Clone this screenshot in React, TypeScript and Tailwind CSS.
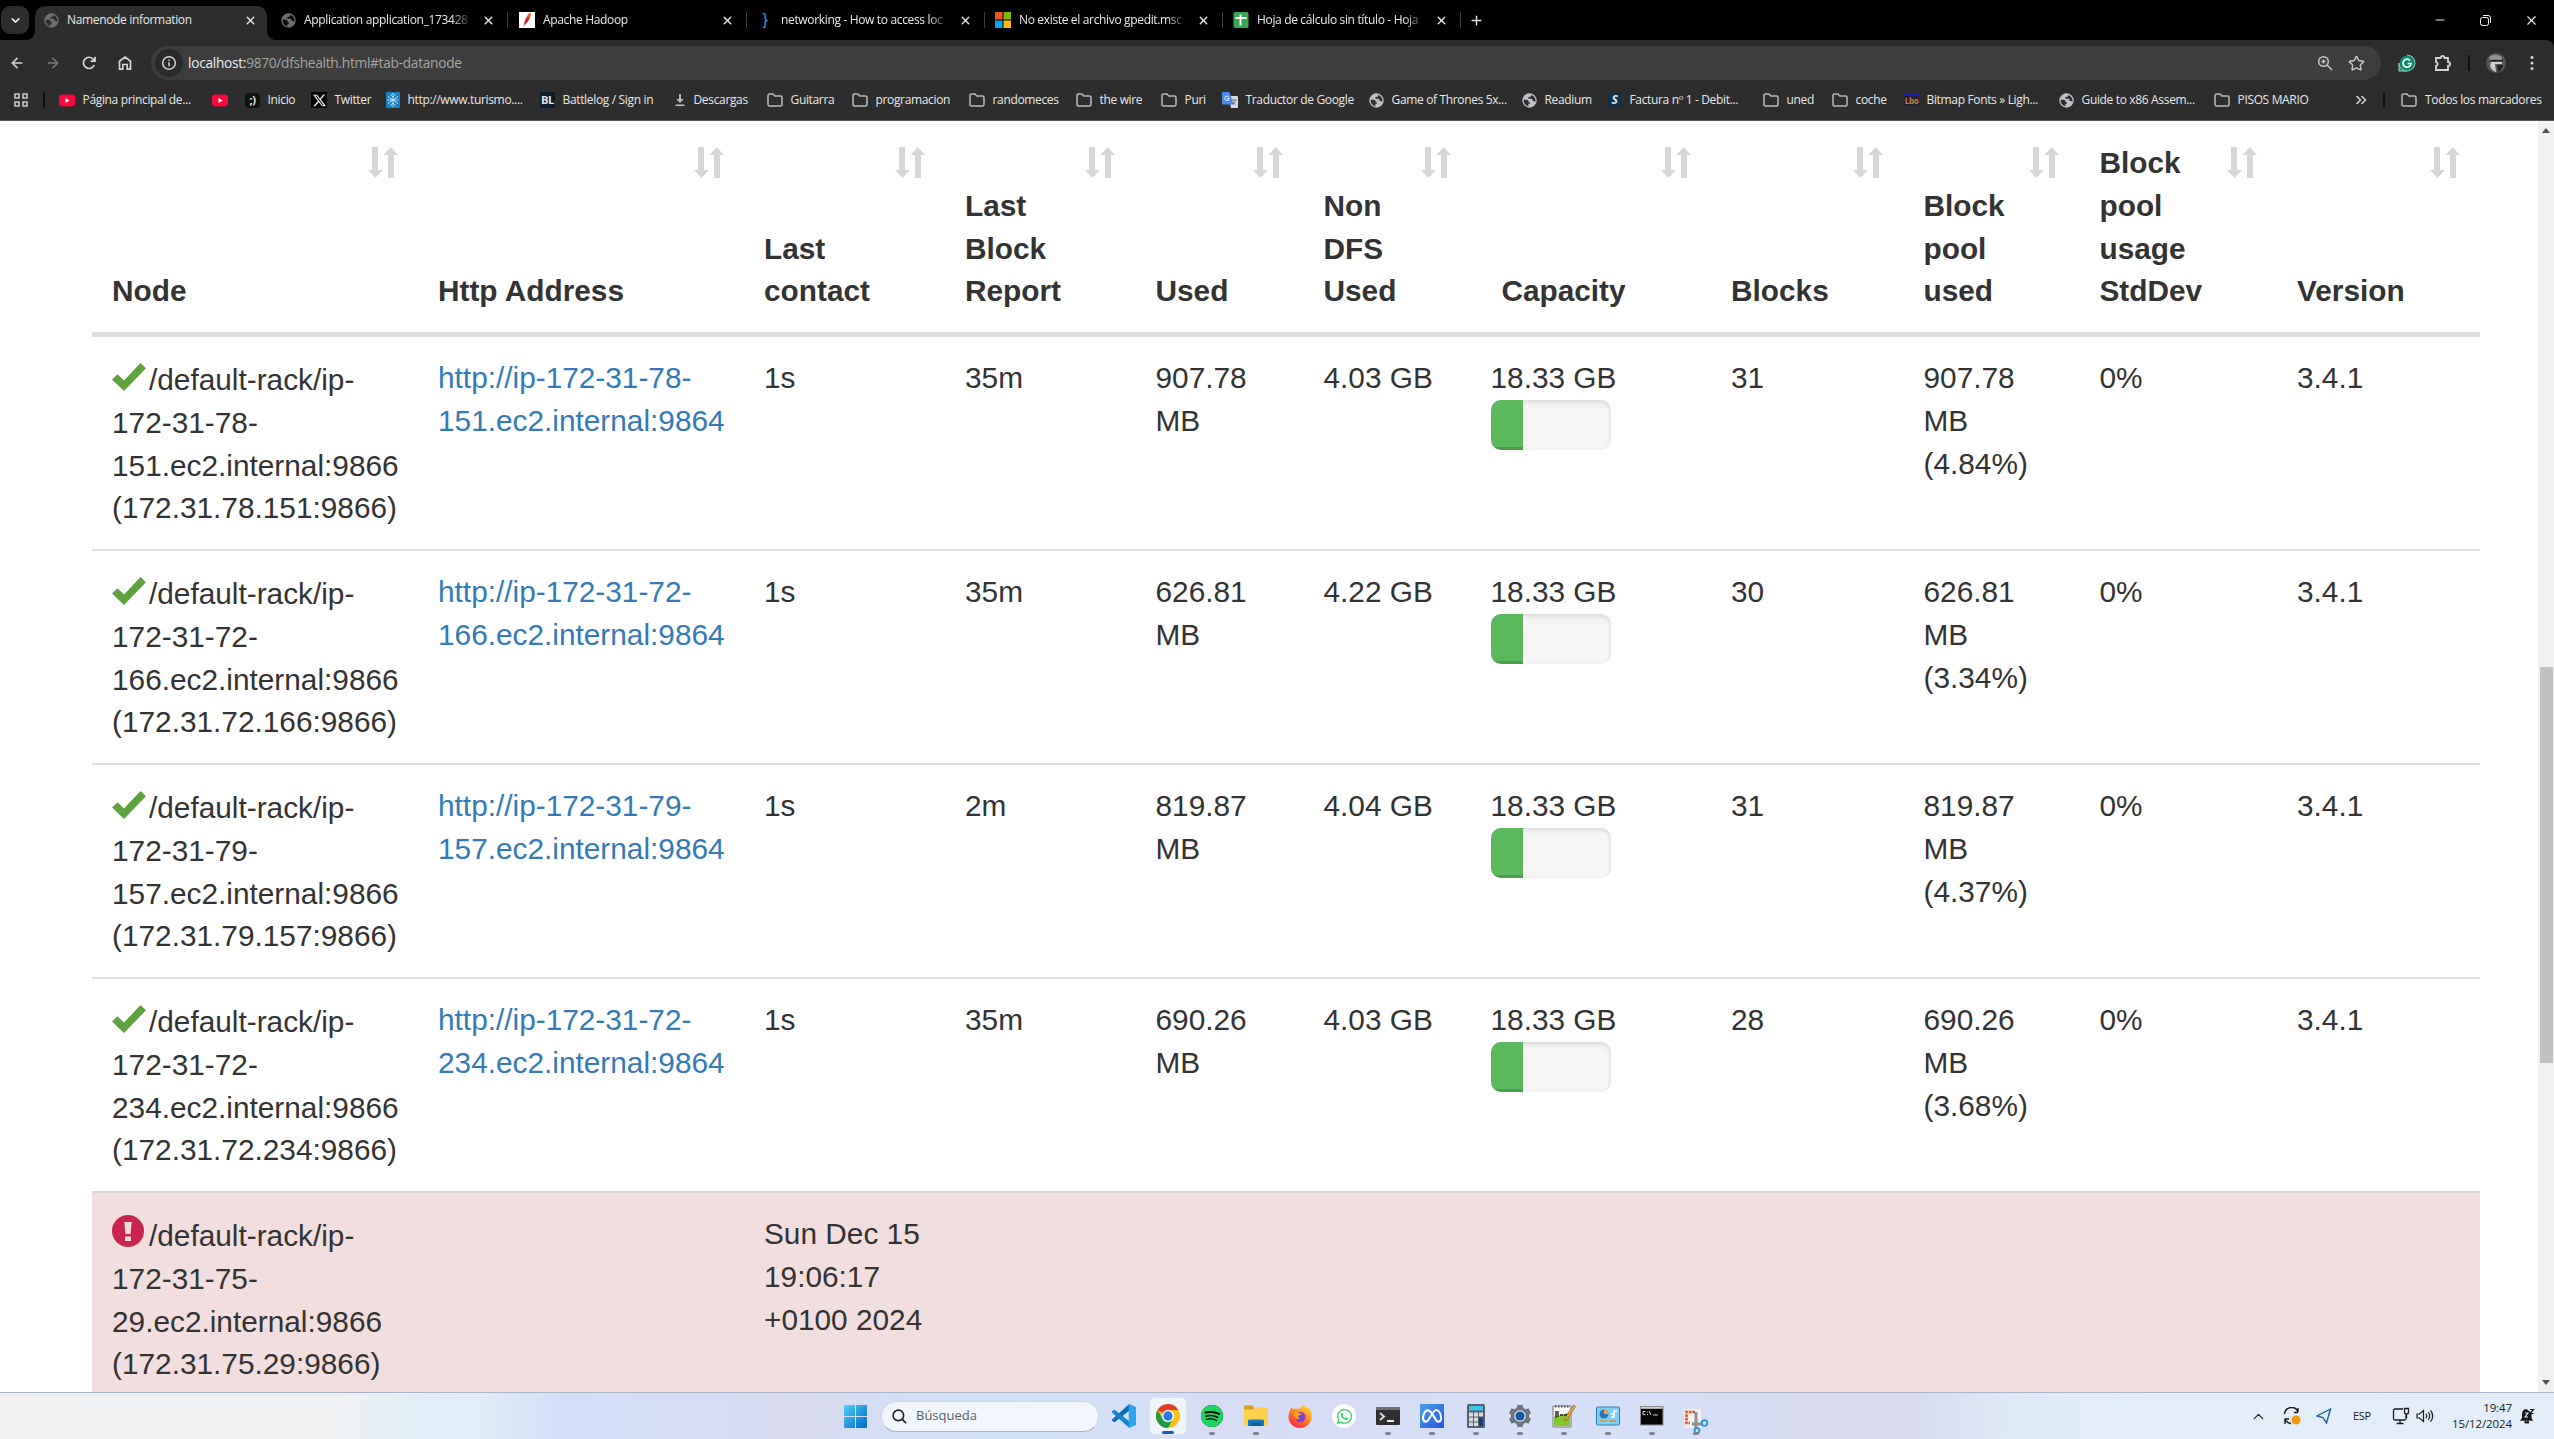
import React from "react";
import { SiSpotify, SiWhatsapp, SiMeta, SiX } from "react-icons/si";
import { ArrowLeft, ArrowRight, Star, ChevronUp, ChevronDown, Plus, X, Minus } from "lucide-react";

const Globe = ({ c = "#bdc1c6", bg = "#2d2d2d" }: { c?: string; bg?: string }) => (
  <svg viewBox="0 0 16 16" className="size-[15px] shrink-0">
    <circle cx="8" cy="8" r="7.7" fill={c} />
    <path d="M1.800 7.200h3.400q1.800 0 1.800 1.800v.8h1.400v1.700H6.800v2.700A6.400 6.400 0 0 1 1.800 7.200zM9.800 2q.2 2-1.600 2.200H6.800v1.800h3.400q1 0 1 1v1.400h1.700l1.300 1.300A6.400 6.400 0 0 0 9.800 2z" fill={bg} />
  </svg>
);

const Folder = () => (
  <svg viewBox="0 0 16 14" className="h-[14px] w-4 shrink-0" fill="none" stroke="#b8bbbe" strokeWidth="1.500">
    <path d="M1 2.500Q1 1 2.500 1H6l1.800 2h5.700Q15 3 15 4.500v7q0 1.500-1.500 1.500h-11Q1 13 1 11.500z" />
  </svg>
);

const YouTube = () => (
  <svg viewBox="0 0 16 13" className="h-[13px] w-4 shrink-0">
    <rect width="16" height="12" y=".5" rx="3" fill="#f8083b" />
    <path d="M6.500 4v5l4-2.500z" fill="#fff" />
  </svg>
);

const Sheets = () => (
  <svg viewBox="0 0 16 16" className="size-4 shrink-0">
    <rect width="15" height="16" x=".5" rx="1.500" fill="#34a853" />
    <path d="M7.500 2.500v11M2.500 6h11" stroke="#fff" strokeWidth="1.800" />
  </svg>
);

const Microsoft = () => (
  <svg viewBox="0 0 16 16" className="size-4 shrink-0">
    <path d="M0 0h7.500v7.500H0z" fill="#f25022" />
    <path d="M8.500 0H16v7.500H8.500z" fill="#7fba00" />
    <path d="M0 8.500h7.500V16H0z" fill="#00a4ef" />
    <path d="M8.500 8.500H16V16H8.500z" fill="#ffb900" />
  </svg>
);

const Feather = () => (
  <svg viewBox="0 0 16 16" className="size-4 shrink-0">
    <rect width="16" height="16" fill="#fff" />
    <path d="M11.500 .8C8 3 5.500 8 4.500 15.200l1.200-2.700C9 11 12 5 11.500 .8z" fill="#c8203c" />
    <path d="M11.500 .8C9 2.200 8 4 7.500 6l2.900-.6C11.400 3.500 11.700 2 11.500 .8z" fill="#e8622c" />
  </svg>
);

const tabs = [
  { icon: <Globe c="#6c6e72" bg="#0c0c0c" />, title: "Application application_173428" },
  { icon: <Feather />, title: "Apache Hadoop" },
  { icon: <span className="w-4 text-center font-['Liberation_Sans'] text-[16px] leading-4 text-[#1ea0e6]">{"}"}</span>, title: "networking - How to access loc" },
  { icon: <Microsoft />, title: "No existe el archivo gpedit.msc" },
  { icon: <Sheets />, title: "Hoja de cálculo sin título - Hoja" },
];

const bookmarks: { w: string; icon: React.ReactNode; label?: string }[] = [
  { w: "w-[153px]", icon: <YouTube />, label: "Página principal de..." },
  { w: "w-[33px]", icon: <YouTube /> },
  { w: "w-[66px]", icon: <span className="flex h-[15px] w-[15px] items-center justify-center rounded-sm bg-[#111] text-[11px] font-bold">;)</span>, label: "Inicio" },
  { w: "w-[75px]", icon: <span className="flex size-4 items-center justify-center bg-black"><SiX size={13} /></span>, label: "Twitter" },
  {
    w: "w-[154px]",
    icon: (
      <svg viewBox="0 0 14 16" className="h-4 w-[14px] shrink-0">
        <rect width="14" height="16" fill="#1583c4" />
        <path d="M7 1v14M2 4.500l10 7M12 4.500l-10 7M4.500 2.500L7 5l2.500-2.500M4.500 13.500L7 11l2.500 2.500M1.500 8h11" stroke="#dff1ff" strokeWidth="1" fill="none" strokeDasharray="2 .6" />
      </svg>
    ),
    label: "http://www.turismo....",
  },
  { w: "w-[134px]", icon: <span className="flex h-4 w-[15px] items-center justify-center bg-[#0c1d2c] text-[11px] font-bold">BL</span>, label: "Battlelog / Sign in" },
  {
    w: "w-[93px]",
    icon: (
      <svg viewBox="0 0 12 14" className="h-[14px] w-3 shrink-0" fill="#b8bbbe">
        <path d="M5 1h2v5h2.800L6 10 2.200 6H5zM1.500 11.500h9v1.600h-9z" />
      </svg>
    ),
    label: "Descargas",
  },
  { w: "w-[85px]", icon: <Folder />, label: "Guitarra" },
  { w: "w-[117px]", icon: <Folder />, label: "programacion" },
  { w: "w-[107px]", icon: <Folder />, label: "randomeces" },
  { w: "w-[85px]", icon: <Folder />, label: "the wire" },
  { w: "w-[61px]", icon: <Folder />, label: "Puri" },
  {
    w: "w-[147px]",
    icon: (
      <svg viewBox="0 0 16 16" className="size-4 shrink-0">
        <path d="M7 4h8q1 0 1 1v10q0 1-1 1H9z" fill="#d8dadd" />
        <path d="M1 0h6.500l4 12.500H1q-1 0-1-1V1q0-1 1-1z" fill="#4a89f3" />
        <path d="M9.500 8h5M12 7v1M10.500 12.500q2.500-1.500 3-4.500M10.500 9.500q1 2 3 3" stroke="#5f6a78" strokeWidth=".9" fill="none" />
        <path d="M6.800 5a2.200 2.200 0 1 0 .4 1.600H5" stroke="#fff" strokeWidth="1" fill="none" />
      </svg>
    ),
    label: "Traductor de Google",
  },
  { w: "w-[153px]", icon: <Globe />, label: "Game of Thrones 5x..." },
  { w: "w-[85px]", icon: <Globe />, label: "Readium" },
  { w: "w-[156px]", icon: <span className="flex size-[15px] items-center justify-center rounded-sm bg-[#12304a] text-[12px] font-bold italic">S</span>, label: "Factura nº 1 - Debit..." },
  { w: "w-[69px]", icon: <Folder />, label: "uned" },
  { w: "w-[72px]", icon: <Folder />, label: "coche" },
  { w: "w-[155px]", icon: <span className="flex h-3 w-[15px] items-center justify-center border-t-2 border-[#1a1ab4] bg-[#262033] text-[8px] font-bold text-[#c8813c]">Lbo</span>, label: "Bitmap Fonts » Ligh..." },
  { w: "w-[155px]", icon: <Globe />, label: "Guide to x86 Assem..." },
  { w: "w-[139px]", icon: <Folder />, label: "PISOS MARIO" },
];

function Chrome() {
  return (
    <header className="h-[121px] shrink-0 border-b border-[#5a5a5a] bg-[#2d2d2d] font-['Open_Sans',sans-serif] text-[12px] tracking-[-0.34px] text-[#e8e8e8]">
      <div className="flex h-10 bg-black">
        <div className="relative flex w-[35px] items-center">
          <div className="ml-px flex h-7 w-[28px] items-center justify-center rounded-[9px] bg-[#2d2d2d]">
            <ChevronDown size={13} strokeWidth={3} />
          </div>
          <span className="absolute right-0 bottom-0 size-2 bg-[radial-gradient(circle_at_0_0,transparent_7.500px,#2d2d2d_8px)]" />
        </div>
        <div className="relative mt-[6px] flex w-[232px] items-center rounded-t-[10px] bg-[#2d2d2d] pb-[6px] pl-[9px]">
          <Globe c="#6c6e72" />
          <span className="ml-2 w-[177px]">Namenode information</span>
          <X size={13} strokeWidth={2.600} />
          <span className="absolute -right-2 bottom-0 size-2 bg-[radial-gradient(circle_at_100%_0,transparent_7.500px,#2d2d2d_8px)]" />
        </div>
        <div className="ml-[14px] flex items-center">
          {tabs.map((t) => (
            <div key={t.title} className="flex h-10 w-[238px] items-center">
              {t.icon}
              <span className="ml-2 w-[168px] whitespace-nowrap [mask-image:linear-gradient(to_right,black_88%,transparent)]">{t.title}</span>
              <X size={13} strokeWidth={2.600} className="ml-[10px] shrink-0" />
              <span className="ml-3 h-4 w-px bg-[#3d3d3d]" />
            </div>
          ))}
          <Plus size={15} strokeWidth={2.200} className="-ml-[2px]" />
        </div>
        <div className="ml-auto flex items-center gap-[33px] pr-[15px]">
          <Minus size={14} strokeWidth={1.800} />
          <svg viewBox="0 0 11 11" className="size-[11px]" fill="none" stroke="#fff">
            <rect x=".5" y="2.500" width="8" height="8" rx="2" />
            <path d="M3 .5h5q2.500 0 2.500 2.500v5" />
          </svg>
          <X size={15} strokeWidth={1.800} />
        </div>
      </div>

      <div className="flex h-[46px] items-center bg-black">
        <div className="flex h-full w-full items-center rounded-tr-lg bg-[#2d2d2d]">
          <div className="flex w-[151px] items-center gap-5 pl-[9px] text-[#d5d5d5]">
            <ArrowLeft size={16} strokeWidth={2.400} />
            <ArrowRight size={16} strokeWidth={2.400} className="text-[#7a7a7a]" />
            <svg viewBox="0 0 16 16" className="size-4" fill="none" stroke="currentColor" strokeWidth="1.700">
              <path d="M13.200 10A5.600 5.600 0 1 1 12.500 4.500L14 6M14 1.800V6.200H9.600" />
            </svg>
            <svg viewBox="0 0 16 16" className="size-4" fill="none" stroke="currentColor" strokeWidth="1.700">
              <path d="M2.500 14.200V6.200L8 2l5.500 4.200v8h-3.300V9.500H5.800v4.700z" />
            </svg>
          </div>
          <div className="flex h-[34px] w-[2230px] items-center rounded-full bg-[#3d3d3d] pl-1 text-[13.700px] tracking-[-0.28px]">
            <span className="flex size-[28px] items-center justify-center rounded-full bg-[#2a2a2a]">
              <svg viewBox="0 0 16 16" className="size-4" fill="none" stroke="#d5d5d5" strokeWidth="1.500">
                <circle cx="8" cy="8" r="6.300" />
                <path d="M8 7.200v4M8 4.400v1.500" />
              </svg>
            </span>
            <span className="ml-[5px] text-[#a5a5a5]">
              <span className="text-[#efefef]">localhost:</span>9870/dfshealth.html#tab-datanode
            </span>
            <svg viewBox="0 0 16 16" className="ml-auto size-4" fill="none" stroke="#c7c7c7" strokeWidth="1.500">
              <circle cx="6.500" cy="6.500" r="4.800" />
              <path d="M10 10l5 5M4.500 6.500h4M6.500 4.500v4" />
            </svg>
            <Star size={17} className="mr-4 ml-[15px] text-[#c7c7c7]" />
          </div>
          <svg viewBox="0 0 18 18" className="ml-[17px] size-[18px]">
            <path d="M9 1a8 8 0 1 1-8 8v8h8" fill="#0f8a6c" stroke="#9fd5c7" />
            <circle cx="9" cy="9" r="7.500" fill="#0f8a6c" />
            <path d="M12 6.500A4 4 0 1 0 13 9.500H9.700" stroke="#fff" strokeWidth="1.700" fill="none" />
          </svg>
          <svg viewBox="0 0 18 18" className="ml-[18px] size-[18px]" fill="none" stroke="#d5d5d5" strokeWidth="1.800">
            <path d="M2 4h4.500a2 2 0 0 1 4 0H14v4a2 2 0 0 1 0 4v4H2v-4a2.200 2.200 0 0 0 0-4.200z" />
          </svg>
          <span className="ml-4 h-4 w-[2px] bg-[#111]" />
          <svg viewBox="0 0 20 20" className="ml-[16px] size-5">
            <circle cx="10" cy="10" r="10" fill="#55575a" />
            <path d="M3 4q6-5 13 0l-1 4H4z" fill="#8f9193" />
            <path d="M5 9h11v2H9l1 8q-4-1-6-6z" fill="#c9cbcc" />
            <path d="M11 12h6q-1 5-5 7z" fill="#1e1f20" />
            <path d="M4 7.500h13" stroke="#18191a" strokeWidth="1.200" />
          </svg>
          <svg viewBox="0 0 4 16" className="ml-[24px] h-4 w-1" fill="#d5d5d5">
            <circle cx="2" cy="2.500" r="1.500" />
            <circle cx="2" cy="8" r="1.500" />
            <circle cx="2" cy="13.500" r="1.500" />
          </svg>
        </div>
      </div>

      <div className="flex h-7 items-center">
        <div className="flex w-[59px] items-center">
          <svg viewBox="0 0 14 14" className="ml-[14px] size-[14px]" fill="none" stroke="#c7c7c7" strokeWidth="1.600">
            <path d="M1 1h4v4H1zM9 1h4v4H9zM1 9h4v4H1zM9 9h4v4H9z" />
          </svg>
          <span className="ml-[15px] h-4 w-[2px] bg-[#111]" />
        </div>
        {bookmarks.map((b, i) => (
          <div key={i} className={`flex shrink-0 items-center whitespace-nowrap ${b.w}`}>
            {b.icon}
            {b.label && <span className="ml-[7.500px]">{b.label}</span>}
          </div>
        ))}
        <svg viewBox="0 0 12 10" className="ml-[2px] h-[10px] w-3" fill="none" stroke="#d5d5d5" strokeWidth="1.500">
          <path d="M1.500 1l4 4-4 4M6.500 1l4 4-4 4" />
        </svg>
        <span className="ml-[16px] h-4 w-[2px] bg-[#111]" />
        <div className="ml-[16px] flex items-center">
          <Folder />
          <span className="ml-2 whitespace-nowrap">Todos los marcadores</span>
        </div>
      </div>
    </header>
  );
}

const columns = [
  { w: "w-[326px]", lines: ["Node"] },
  { w: "w-[326px]", lines: ["Http Address"] },
  { w: "w-[201px]", lines: ["Last", "contact"] },
  { w: "w-[190.500px]", lines: ["Last", "Block", "Report"] },
  { w: "w-[168px]", lines: ["Used"] },
  { w: "w-[167.500px]", lines: ["Non", "DFS", "Used"] },
  { w: "w-[240px]", lines: ["Capacity"], center: true },
  { w: "w-[192.500px]", lines: ["Blocks"] },
  { w: "w-[176px]", lines: ["Block", "pool", "used"] },
  { w: "w-[197.500px]", lines: ["Block", "pool", "usage", "StdDev"] },
  { w: "w-[203px]", lines: ["Version"] },
];

const nodes = [
  { a: "78", b: "151", report: "35m", used: "907.78", non: "4.03 GB", blocks: "31", pct: "4.84%" },
  { a: "72", b: "166", report: "35m", used: "626.81", non: "4.22 GB", blocks: "30", pct: "3.34%" },
  { a: "79", b: "157", report: "2m", used: "819.87", non: "4.04 GB", blocks: "31", pct: "4.37%" },
  { a: "72", b: "234", report: "35m", used: "690.26", non: "4.03 GB", blocks: "28", pct: "3.68%" },
];

const SortIcon = () => (
  <svg viewBox="0 0 30 31" className="absolute top-[5px] right-[20.500px] h-[31px] w-[30px]" fill="#d6d6d6">
    <path d="M4 0h6v23h5L7.500 31 0 23h4zM20 31h6V8h4L22.800 0 15.500 8H20z" />
  </svg>
);

const Check = () => (
  <svg viewBox="0 0 34 28" className="mt-[-7px] mr-[3px] h-[28px] w-[34px] shrink-0" fill="#5fa33e">
    <path d="M0 16.500l5.500-5.300 6.500 6.400L28.500 0 34 5.200 12 28z" />
  </svg>
);

const Alert = () => (
  <svg viewBox="0 0 32 32" className="mt-[-11px] mr-[5px] size-8 shrink-0">
    <circle cx="16" cy="16" r="16" fill="#c7254e" />
    <path d="M12.300 7h7.400l-1.200 12h-5zM13 21.500h6V26h-6z" fill="#f2dede" />
  </svg>
);

const NodeName = ({ icon, a, b }: { icon: React.ReactNode; a: string; b: string }) => (
  <>
    <div className="flex items-center pt-[2px]">
      {icon}
      <span>/default-rack/ip-</span>
    </div>
    <div>172-31-{a}-</div>
    <div>{b}.ec2.internal:9866</div>
    <div>(172.31.{a}.{b}:9866)</div>
  </>
);

function DataTable() {
  return (
    <div className="ml-[92px] w-[2388px] font-['Liberation_Sans',Arial,sans-serif] text-[29.800px] leading-[42.750px] text-[#333]">
      <div className="flex border-b-[5px] border-[#ddd] pb-[19px] pt-[21px] font-bold">
        {columns.map((c, i) => (
          <div key={i} className={`relative flex shrink-0 flex-col justify-end pl-5 ${c.center ? "pr-[75px] text-center" : ""} ${c.w}`}>
            <SortIcon />
            {c.lines.map((l) => (
              <span key={l}>{l}</span>
            ))}
          </div>
        ))}
      </div>
      {nodes.map((n, i) => (
        <div key={i} className={`flex *:shrink-0 *:pl-5 ${i ? "h-[214px] border-t-2 border-[#ddd] pt-5" : "h-[212px] pt-5"}`}>
          <div className="w-[326px]">
            <NodeName icon={<Check />} a={n.a} b={n.b} />
          </div>
          <div className="w-[326px] text-[#337ab7]">
            http://ip-172-31-{n.a}-<br />
            {n.b}.ec2.internal:9864
          </div>
          <div className="w-[201px]">1s</div>
          <div className="w-[190.500px]">{n.report}</div>
          <div className="w-[168px]">
            {n.used}
            <br />
            MB
          </div>
          <div className="w-[167px]">{n.non}</div>
          <div className="w-[240.500px]">
            18.33 GB
            <div className="h-[50px] w-[120px] overflow-hidden rounded-[10px] bg-[#f5f5f5] shadow-[inset_0_2px_5px_rgba(0,0,0,0.12)]">
              <div className="h-full w-8 bg-[#5cb85c] shadow-[inset_0_-3px_0_rgba(0,0,0,0.15)]" />
            </div>
          </div>
          <div className="w-[192.500px]">{n.blocks}</div>
          <div className="w-[176px]">
            {n.used}
            <br />
            MB
            <br />({n.pct})
          </div>
          <div className="w-[197.500px]">0%</div>
          <div className="w-[203px]">3.4.1</div>
        </div>
      ))}
      <div className="flex h-[214px] border-t-2 border-[#ddd4d4] bg-[#f2dede] pt-5 *:shrink-0 *:pl-5">
        <div className="w-[652px]">
          <NodeName icon={<Alert />} a="75" b="29" />
        </div>
        <div>
          Sun Dec 15
          <br />
          19:06:17
          <br />
          +0100 2024
        </div>
      </div>
    </div>
  );
}

function Scrollbar() {
  return (
    <div className="ml-auto flex w-4 flex-col items-center bg-[#f1f1f1]">
      <svg viewBox="0 0 8 5" className="mt-[7px] h-[5px] w-2 shrink-0" fill="#505050">
        <path d="M4 0l4 5H0z" />
      </svg>
      <div className="mt-[534px] h-[396px] w-[13px] shrink-0 bg-[#c1c1c1]" />
      <svg viewBox="0 0 8 5" className="mt-auto mb-[7px] h-[5px] w-2 shrink-0" fill="#505050">
        <path d="M0 0h8L4 5z" />
      </svg>
    </div>
  );
}

const ChromeLogo = () => (
  <svg viewBox="0 0 24 24" className="size-6">
    <circle cx="12" cy="12" r="12" fill="#fbc116" />
    <path d="M12 0a12 12 0 0 1 10.400 6H12a6 6 0 0 0-5.200 3L1.600 6A12 12 0 0 1 12 0z" fill="#e33b2e" />
    <path d="M1.600 6l5.200 9a6 6 0 0 0 10.400 0l-5.200 9A12 12 0 0 1 1.600 6z" fill="#219a48" />
    <circle cx="12" cy="12" r="6" fill="#fff" />
    <circle cx="12" cy="12" r="4.700" fill="#2b76e5" />
  </svg>
);

const apps: { icon: React.ReactNode; dot?: boolean; active?: boolean }[] = [
  {
    icon: (
      <svg viewBox="0 0 24 24" className="size-6">
        <path d="M17.500 6.500L2.500 18.200 0 16.700 0 15.600 17.300 0z" fill="#0c6fb8" />
        <path d="M17.500 17.500L2.500 5.800 0 7.300 0 8.400 17.300 24z" fill="#1283cc" />
        <path d="M17.300 0L24 3v18l-6.700 3q-.9-.3-.5-1.500V1.500Q16.600.5 17.300 0z" fill="#2aa5f0" />
      </svg>
    ),
  },
  { icon: <ChromeLogo />, active: true },
  { icon: <span className="rounded-full bg-black"><SiSpotify size={22} color="#1ed760" /></span>, dot: true },
  {
    icon: (
      <svg viewBox="0 0 24 24" className="size-6">
        <path d="M0 2.500Q0 1.500 1 1.500h7l2 2v4H0z" fill="#d89b1c" />
        <path d="M0 5.500h10l2-2h11q1 0 1 1V22H0z" fill="#fbd04b" />
        <path d="M4 22v-5q0-1.500 1.500-1.500h13q1.500 0 1.500 1.500v5z" fill="#1778c4" />
        <path d="M7 18.500h10V22H7z" fill="#0f5c9e" />
      </svg>
    ),
    dot: true,
  },
  {
    icon: (
      <svg viewBox="0 0 24 24" className="size-6">
        <defs>
          <linearGradient id="ff" x1="0.800" y1="0" x2="0.200" y2="1">
            <stop offset="0" stopColor="#ffde3a" />
            <stop offset=".45" stopColor="#ff8a1e" />
            <stop offset="1" stopColor="#f5204c" />
          </linearGradient>
        </defs>
        <path d="M3.500 3l2 2.500Q8 4 10.500 5 13 3 16 0q1 3 3.500 4.500l.5-1.500Q24 7 23.500 13A11.500 11 0 0 1 .5 13Q.3 8 3.500 3z" fill="url(#ff)" />
        <circle cx="12.300" cy="13" r="5.200" fill="#7a3fd0" />
        <path d="M5 8.500q4-1.500 6 .5l3 .5q-1 2-3.500 2.200-1 2 1.500 3.300-4 1-5.500-2z" fill="#ff9a24" />
      </svg>
    ),
  },
  { icon: <span className="flex size-6 items-center justify-center rounded-full bg-white"><SiWhatsapp size={15} color="#2fce6a" /></span> },
  {
    icon: (
      <svg viewBox="0 0 24 18" className="h-[18px] w-6">
        <rect width="24" height="18" rx="1" fill="#2f2f31" />
        <path d="M0 0h24v3H0z" fill="#6e6e70" />
        <path d="M4 6l4 3.500L4 13" stroke="#d8d8d8" strokeWidth="2" fill="none" />
        <path d="M11 14h7" stroke="#fff" strokeWidth="1.800" />
      </svg>
    ),
    dot: true,
  },
  { icon: <span className="flex size-6 items-center justify-center bg-linear-to-br from-[#4da0e0] to-[#2a50e0]"><SiMeta size={20} color="#fff" /></span>, dot: true },
  {
    icon: (
      <svg viewBox="0 0 18 24" className="h-6 w-[18px]">
        <rect width="18" height="24" rx="1.500" fill="#56606e" />
        <path d="M2 2h14v4.500H2z" fill="#3cc6ee" />
        <path d="M2 8.500h4v4H2zM7 8.500h4v4H7zM12 8.500h4v4h-4zM2 13.500h4v4H2zM7 13.500h4v4H7zM2 18.500h4v3.500H2zM7 18.500h4v3.500H7z" fill="#d8dde4" />
        <path d="M12 13.500h4V22h-4z" fill="#113f80" />
      </svg>
    ),
    dot: true,
  },
  {
    icon: (
      <svg viewBox="0 0 24 24" className="size-6">
        <path d="M9.500 1h5l.8 3 2.200 1.200 3-.8 2.500 4.300L21 11v2l2 2.300-2.500 4.300-3-.8-2.200 1.200-.8 3h-5l-.8-3-2.200-1.200-3 .8L1 15.300 3 13v-2L1 8.700l2.500-4.300 3 .8L8.700 4z" fill="#6d747e" />
        <circle cx="12" cy="12" r="5.800" fill="#e8edf4" />
        <circle cx="12" cy="12" r="4.600" fill="#0f56a8" />
      </svg>
    ),
    dot: true,
  },
  {
    icon: (
      <svg viewBox="0 0 24 24" className="size-6">
        <path d="M1 2h18v21H1z" fill="#f6f8f2" stroke="#777" />
        <path d="M2 13q8-2 16-5v14H2z" fill="#7ec92c" />
        <path d="M3 2.500h15" stroke="#555" strokeWidth="2" strokeDasharray="1.500 1.500" />
        <path d="M4 7v7M6 7v6M8 11h3M12 11h3" stroke="#222" strokeWidth="1.400" />
        <path d="M21.500 1l2 1.500L15 16l-2.500 1 .5-3z" fill="#e0a040" stroke="#8a5a20" strokeWidth=".6" />
      </svg>
    ),
    dot: true,
  },
  {
    icon: (
      <svg viewBox="0 0 24 20" className="h-5 w-6">
        <rect x=".5" y="1" width="23" height="18" rx="1" fill="#7fd0f4" stroke="#2d7fb8" />
        <circle cx="8" cy="8" r="4.500" fill="#2f73c0" />
        <path d="M8 8V3.500A4.500 4.500 0 0 1 12.500 8z" fill="#f5a04a" />
        <path d="M15 11h3V5h3M15 8h3" stroke="#fff" strokeWidth="1.600" fill="none" />
        <path d="M4 15h7M13 15h7" stroke="#e88a30" strokeWidth="1.600" />
      </svg>
    ),
    dot: true,
  },
  {
    icon: (
      <svg viewBox="0 0 24 20" className="h-5 w-6">
        <rect x=".5" y=".5" width="22.500" height="18.500" fill="#060606" stroke="#8c8c8c" />
        <path d="M1 1h21.500v1.800H1z" fill="#d0d0d0" />
        <path d="M5.500 5.500H3v3h2.500M7.500 5.500v1M7.500 8v1M9 5l2 4M13 9h5" stroke="#e0e0e0" strokeWidth=".9" fill="none" />
      </svg>
    ),
    dot: true,
  },
  {
    icon: (
      <svg viewBox="0 0 26 26" className="mt-[10px] size-[26px]">
        <rect width="17" height="19" x="1" y="1" rx="1" fill="#f3eee9" />
        <path d="M12 4H3.500v11H7" stroke="#d8532c" strokeWidth="2.600" fill="none" strokeDasharray="2.600 1" />
        <path d="M13 4v12h6M9 16h4v5" stroke="#8b9096" strokeWidth="3" fill="none" />
        <circle cx="21.500" cy="15" r="2.800" stroke="#1f96d6" strokeWidth="1.800" fill="none" />
        <circle cx="14" cy="22.500" r="2.500" stroke="#1f96d6" strokeWidth="1.800" fill="none" />
      </svg>
    ),
    dot: true,
  },
];

function Taskbar() {
  return (
    <footer className="flex h-[47px] shrink-0 items-center border-t border-[#a9b3c6] bg-[linear-gradient(90deg,#f1f1f2_0%,#f0f1f3_13%,#e3eff7_16%,#e0ecf8_19%,#d2dff9_22%,#d6def7_26%,#d6dcf4_29%,#d9daee_31%,#d4dff7_35%,#d1e2fb_40%,#d6dff6_45%,#d6dcf3_50%,#d6dff6_58%,#d5e0f8_65%,#d8daee_71%,#d9dcf0_75%,#dfebf8_79%,#e3eef8_85%,#e2edf8_100%)] font-['Open_Sans',sans-serif] text-[#1b1b1b]">
      <svg viewBox="0 0 23 23" className="ml-[844px] size-[23px]">
        <defs>
          <linearGradient id="win" x1="0" y1="0" x2="1" y2="1">
            <stop offset="0" stopColor="#4fd0fb" />
            <stop offset="1" stopColor="#0067c4" />
          </linearGradient>
        </defs>
        <path d="M0 1q0-1 1-1h10v11H0zM12 0h10q1 0 1 1v10H12zM0 12h11v11H1q-1 0-1-1zM12 12h11v10q0 1-1 1H12z" fill="url(#win)" />
      </svg>
      <div className="ml-[14px] flex h-[31px] w-[218px] items-center rounded-full border border-b-[#aab4ca] border-[#cfd6e6] bg-[#f2f6fd] pl-[10px]">
        <svg viewBox="0 0 16 16" className="size-[15px]" fill="none" stroke="#222" strokeWidth="1.700">
          <circle cx="6.800" cy="6.800" r="5.600" />
          <path d="M11 11l4 4" />
        </svg>
        <span className="ml-[9px] text-[13px] text-[#5c5f66]">Búsqueda</span>
      </div>
      <div className="ml-[6px] flex h-full">
        {apps.map((a, i) => (
          <div key={i} className={`relative mt-1 mr-[6px] flex h-[38px] w-[38px] items-center justify-center ${a.active ? "rounded-md border border-[#e0e6f4] bg-[#f0f4fc]" : ""}`}>
            {a.icon}
            {a.active && <span className="absolute bottom-0 h-[3px] w-3 rounded-full bg-[#0f67b8]" />}
            {a.dot && <span className="absolute bottom-0 h-[3px] w-[6px] rounded-full bg-[#7d828c]" />}
          </div>
        ))}
      </div>
      <div className="ml-auto flex items-center pr-[19px]">
        <ChevronUp size={17} strokeWidth={1.700} />
        <svg viewBox="0 0 18 18" className="ml-4 size-[18px]" fill="none" stroke="#1b1b1b" strokeWidth="1.400">
          <path d="M1.500 7A7 7 0 0 1 15 5V1M15 5.500h-4M2 17v-5h4M2 12.500Q4 16 8 16.500" />
          <circle cx="13" cy="13" r="4.500" fill="#f7960f" stroke="none" />
        </svg>
        <svg viewBox="0 0 16 16" className="ml-[15px] size-4" fill="none" stroke="#1f5fa8" strokeWidth="1.400">
          <path d="M14.500 1L1 8l6 1.500L10.500 15z" />
        </svg>
        <span className="ml-[21px] w-5 text-[11px] tracking-[-0.3px]">ESP</span>
        <svg viewBox="0 0 18 18" className="ml-[19px] size-[18px]" fill="none" stroke="#1b1b1b" strokeWidth="1.300">
          <path d="M11 2H3Q1.500 2 1.500 3.500v8Q1.500 13 3 13h9.500Q14 13 14 11.500V8M8 13v3M4.500 16.500h7M12.500 1.500h4V5q0 2-2 2t-2-2zM14.500 7v4" />
        </svg>
        <svg viewBox="0 0 18 16" className="ml-[6px] h-4 w-[18px]" fill="none" stroke="#1b1b1b" strokeWidth="1.200">
          <path d="M1 6h2.500L7.500 2.500v11L3.500 10H1zM10 5.800q1.400 2.200 0 4.400M12.300 4q2.800 4 0 8M14.600 2.300q4.200 5.700 0 11.400" />
        </svg>
        <div className="ml-4 w-[62px] text-right text-[11.500px] leading-4 tracking-[-0.1px] whitespace-nowrap">
          <div>19:47</div>
          <div className="-ml-4">15/12/2024</div>
        </div>
        <svg viewBox="0 0 15 16" className="ml-2 h-4 w-[15px]">
          <path d="M6.500 1Q2 1.500 2 6v4L0 12.800h13L11.500 10V5z" fill="#151515" />
          <path d="M4.500 14.300h4.500" stroke="#151515" strokeWidth="2.200" />
          <path d="M5 5h3L5 9h3" stroke="#e5eef8" strokeWidth="1.100" fill="none" />
          <path d="M10 1.500h3.500L10 5.500h3.500" stroke="#151515" strokeWidth="1.200" fill="none" />
        </svg>
      </div>
    </footer>
  );
}

export default function App() {
  return (
    <div className="flex h-[1439px] w-[2554px] flex-col overflow-hidden bg-white">
      <Chrome />
      <main className="flex min-h-0 flex-1 overflow-hidden">
        <DataTable />
        <Scrollbar />
      </main>
      <Taskbar />
    </div>
  );
}
